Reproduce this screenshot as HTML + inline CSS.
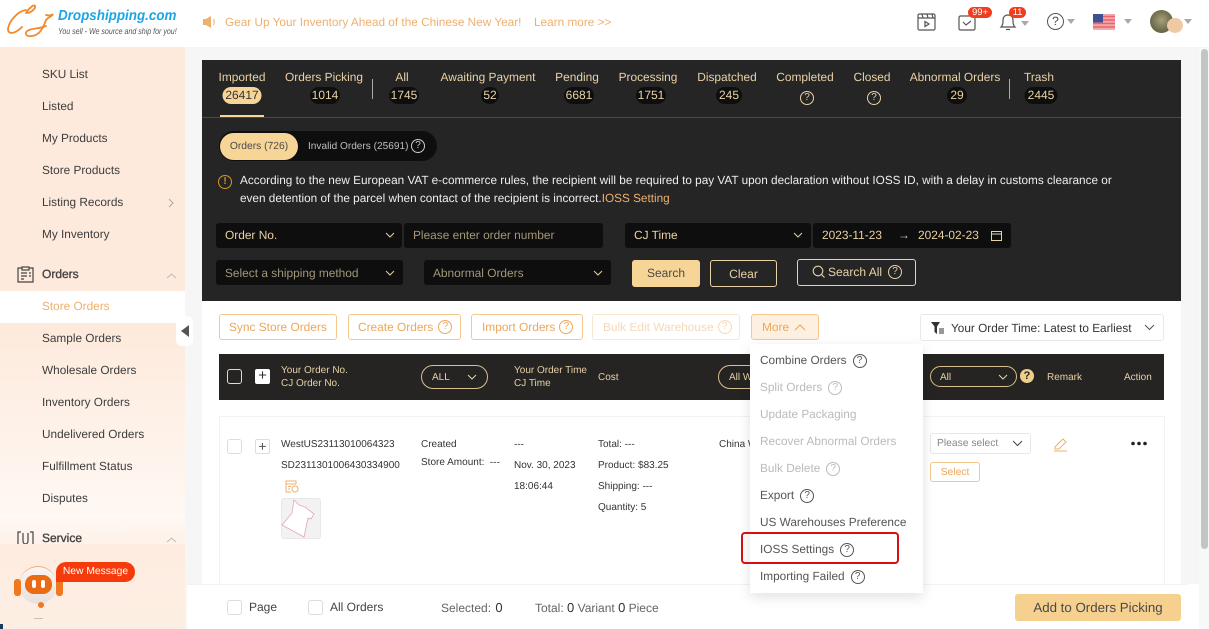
<!DOCTYPE html>
<html><head><meta charset="utf-8"><style>
*{box-sizing:border-box}
html,body{margin:0;padding:0}
body{width:1209px;height:629px;overflow:hidden;position:relative;background:#f6f6f6;font-family:"Liberation Sans",sans-serif;font-size:12px;color:#333;text-rendering:geometricPrecision}
.a,.t,.c{position:absolute}
.t{white-space:nowrap;line-height:16px}
.c{white-space:nowrap;line-height:16px;transform:translateX(-50%)}
.side{color:#3d3d3d;font-size:11.800px;left:42px}
.tab{color:#e8d2a6;font-size:11.900px;top:69px}
.pill{position:absolute;top:87px;height:17px;border-radius:9px;background:#0e0e0e;color:#e8d2a6;font-size:12px;line-height:17px;text-align:center;transform:translateX(-50%)}
.box{position:absolute;background:#0e0e0e;border-radius:3px;height:25px;line-height:25px;font-size:11.900px;color:#e8d2a6;padding-left:9px;white-space:nowrap}
.btn{position:absolute;top:314px;height:26px;border:1px solid #f3c88e;border-radius:3px;background:#fff;color:#eda75a;font-size:11.900px;line-height:24px;white-space:nowrap;padding-left:10px}
.btn .q{vertical-align:2px}
.m{position:absolute;left:760px;font-size:11.800px;line-height:16px;white-space:nowrap;color:#555}
.d{color:#bbb}
.h{color:#e8d2a6;font-size:10px;line-height:13px;position:absolute;white-space:nowrap}
.s{font-size:10px;color:#333;position:absolute;white-space:nowrap;line-height:14px;margin-top:2px}
svg{position:absolute;overflow:visible}
.q{display:inline-block;width:14px;height:14px;border:1px solid currentColor;border-radius:50%;font-size:10px;line-height:12px;text-align:center;vertical-align:1px;margin-left:6px}
.b{-webkit-text-stroke:.35px #444}
</style></head><body>

<!-- header -->
<div class="a" style="left:0;top:0;width:1209px;height:47px;background:#fff"></div>
<svg style="left:0;top:0" width="60" height="46" viewBox="0 0 60 46" fill="none" stroke="#f08a2c" stroke-width="1.800" stroke-linecap="round"><path d="M26 10C18 11 9 21 8 29c0 6 7 5 14-2"/><path d="M26 13c3-5 8-9 9-7 1 2-3 6-7 7"/><path d="M46 15c3 1 6 0 7-1-1 3-5 3-7 6-2 5-5 15-14 16-7 1-8-4-3-6 5-2 10-1 17-4"/></svg>
<div class="t" style="left:58px;top:8px;font-size:14.500px;font-style:italic;font-weight:bold;color:#1aa6e6;transform:scaleX(.925);transform-origin:0 50%">Dropshipping.com</div>
<div class="t" style="left:58px;top:23px;font-size:8.500px;font-style:italic;color:#555;transform:scaleX(.83);transform-origin:0 50%">You sell - We source and ship for you!</div>
<svg style="left:202px;top:14px" width="16" height="16" viewBox="0 0 16 16"><path d="M1 5h3l5-3v12l-5-3H1z" fill="#eeb06e"/><path d="M11.500 5c1 2 1 4 0 6" stroke="#eeb06e" fill="none"/></svg>
<div class="t" style="left:225px;top:14px;font-size:11.800px;color:#eeb06e">Gear Up Your Inventory Ahead of the Chinese New Year!</div>
<div class="t" style="left:534px;top:14px;font-size:11.800px;color:#eeb06e">Learn more &gt;&gt;</div>

<svg style="left:917px;top:13px" width="20" height="18" viewBox="0 0 20 18" fill="none" stroke="#555" stroke-width="1.200"><rect x="1" y="1" width="17" height="16" rx="1.500"/><path d="M1 5h17M5 1l1 4M10 1l1 4M15 1l1 4"/><path d="M8 8.500v5l4-2.500z"/></svg>
<svg style="left:958px;top:14px" width="18" height="17" viewBox="0 0 18 17" fill="none" stroke="#555" stroke-width="1.200"><rect x="1" y="2" width="16" height="14" rx="1.500"/><path d="M5 8l3 3 5-4"/></svg>
<div class="a" style="left:968px;top:7px;width:24px;height:11px;border-radius:6px;background:#f23c1e;color:#fff;font-size:9.500px;line-height:11px;text-align:center">99+</div>
<svg style="left:999px;top:13px" width="18" height="18" viewBox="0 0 18 18" fill="none" stroke="#555" stroke-width="1.200"><path d="M2 14c2-2 2-4 2-7 0-3 2-5 5-5s5 2 5 5c0 3 0 5 2 7z"/><path d="M7 16.500h4"/></svg>
<div class="a" style="left:1009px;top:7px;width:17px;height:11px;border-radius:6px;background:#f23c1e;color:#fff;font-size:9.500px;line-height:11px;text-align:center">11</div>
<div class="a" style="left:1021px;top:21px;border:4px solid transparent;border-top:5px solid #aaa"></div>
<div class="a" style="left:1047px;top:13px;width:17px;height:17px;border:1.200px solid #555;border-radius:50%;text-align:center;font-size:12px;line-height:15px;color:#444">?</div>
<div class="a" style="left:1067px;top:19px;border:4px solid transparent;border-top:5px solid #aaa"></div>
<svg style="left:1093px;top:14px" width="22" height="16" viewBox="0 0 22 16"><rect width="22" height="16" fill="#f3a9ac"/><path d="M0 2.500h22M0 6h22M0 9.500h22M0 13h22" stroke="#e8636a" stroke-width="1.400"/><rect width="10" height="8.500" fill="#3f4f92"/></svg>
<div class="a" style="left:1124px;top:19px;border:4px solid transparent;border-top:5px solid #aaa"></div>
<div class="a" style="left:1150px;top:10px;width:23px;height:23px;border-radius:50%;background:radial-gradient(circle at 50% 45%,#a89f7c 0,#6d6c4c 60%,#4d5a33 100%)"></div>
<div class="a" style="left:1167px;top:18px;width:16px;height:15px;border-radius:50%;background:#eec9a4"></div>
<div class="a" style="left:1184px;top:19px;border:4px solid transparent;border-top:5px solid #aaa"></div>

<!-- sidebar -->
<div class="a" style="left:0;top:47px;width:185px;height:582px;background:linear-gradient(180deg,#fdeadc 0,#fdeadc 280px,#fff8f3 470px,#fdeadc 530px)"></div>
<div class="t side" style="top:66px">SKU List</div>
<div class="t side" style="top:98px">Listed</div>
<div class="t side" style="top:130px">My Products</div>
<div class="t side" style="top:162px">Store Products</div>
<div class="t side" style="top:194px">Listing Records</div>
<svg style="left:168px;top:198px" width="7" height="10" fill="none" stroke="#aaa"><path d="M1 1l4 4-4 4"/></svg>
<div class="t side" style="top:226px">My Inventory</div>
<svg style="left:17px;top:266px" width="17" height="17" viewBox="0 0 17 17" fill="none" stroke="#444" stroke-width="1.200"><path d="M5 2H1v14h15V2h-4"/><rect x="5" y="1" width="7" height="3"/><path d="M4 7h6M4 10h6M4 13h3M12 7h2M12 10h2"/></svg>
<div class="t b" style="left:42px;top:266px;font-size:12px;color:#444">Orders</div>
<svg style="left:166px;top:272px" width="11" height="7" fill="none" stroke="#bbb"><path d="M1 6l4.500-4 4.500 4"/></svg>
<div class="a" style="left:0;top:291px;width:185px;height:32px;background:#fff"></div>
<div class="t side" style="top:298px;color:#eeb06e">Store Orders</div>
<div class="t side" style="top:330px">Sample Orders</div>
<div class="t side" style="top:362px">Wholesale Orders</div>
<div class="t side" style="top:394px">Inventory Orders</div>
<div class="t side" style="top:426px">Undelivered Orders</div>
<div class="t side" style="top:458px">Fulfillment Status</div>
<div class="t side" style="top:490px">Disputes</div>
<svg style="left:17px;top:530px" width="17" height="17" viewBox="0 0 17 17" fill="none" stroke="#444" stroke-width="1.200"><path d="M1 15V2h3M16 15V2h-3M6 3v8c0 4 5 4 5 0V3"/></svg>
<div class="t b" style="left:42px;top:530px;font-size:12px;color:#444">Service</div>
<svg style="left:166px;top:536px" width="11" height="7" fill="none" stroke="#bbb"><path d="M1 6l4.500-4 4.500 4"/></svg>
<div class="a" style="left:0;top:544px;width:185px;height:85px;background:linear-gradient(180deg,#feece0,#fdeee3)"></div>
<div class="a" style="left:176px;top:316px;width:17px;height:30px;border-radius:6px;background:#fff"></div>
<svg style="left:180px;top:325px" width="10" height="12"><path d="M9 0v12L1 6z" fill="#555"/></svg>
<!-- robot -->
<div class="a" style="left:19px;top:566px;width:38px;height:38px;border-radius:50%;background:linear-gradient(180deg,#fbf5f1,#e8e0dc);border-top:1px solid #f3a880"></div>
<div class="a" style="left:14px;top:579px;width:7px;height:17px;border-radius:3px;background:#f0781e"></div>
<div class="a" style="left:56px;top:579px;width:7px;height:17px;border-radius:3px;background:#f0781e"></div>
<div class="a" style="left:25px;top:575px;width:27px;height:19px;border-radius:9px;background:#ec6a12"></div>
<div class="a" style="left:32px;top:580px;width:4px;height:8px;border-radius:2px;background:#fff"></div>
<div class="a" style="left:41px;top:580px;width:4px;height:8px;border-radius:2px;background:#fff"></div>
<div class="a" style="left:38px;top:602px;width:6px;height:6px;border-radius:50%;background:#f0781e"></div>
<div class="a" style="left:34px;top:618px;width:9px;height:1px;background:#cbbfb8"></div>
<div class="a" style="left:56px;top:562px;width:79px;height:20px;border-radius:10px 10px 10px 0;background:#f53a0c;color:#fff;font-size:10.300px;line-height:19px;text-align:center">New Message</div>
<div class="a" style="left:0;top:624px;width:3px;height:5px;background:#1b3a5c"></div>

<!-- dark panel -->
<div class="a" style="left:202px;top:60px;width:979px;height:241px;background:#252525"></div>
<div class="a" style="left:202px;top:117px;width:979px;height:1px;background:#4a4a4a"></div>
<div class="a" style="left:220px;top:115px;width:44px;height:2px;background:#f6d597"></div>
<div class="t c tab" style="left:242px">Imported</div>
<div class="pill" style="left:242px;width:39px;background:#f6d597;color:#333">26417</div>
<div class="t c tab" style="left:324px">Orders Picking</div>
<div class="pill" style="left:325px;width:30px">1014</div>
<div class="a" style="left:372px;top:79px;width:1px;height:20px;background:#aaa"></div>
<div class="t c tab" style="left:402px">All</div>
<div class="pill" style="left:404px;width:30px">1745</div>
<div class="t c tab" style="left:488px">Awaiting Payment</div>
<div class="pill" style="left:490px;width:18px">52</div>
<div class="t c tab" style="left:577px">Pending</div>
<div class="pill" style="left:579px;width:30px">6681</div>
<div class="t c tab" style="left:648px">Processing</div>
<div class="pill" style="left:651px;width:30px">1751</div>
<div class="t c tab" style="left:727px">Dispatched</div>
<div class="pill" style="left:729px;width:26px">245</div>
<div class="t c tab" style="left:805px">Completed</div>
<div class="a" style="left:800px;top:91px;width:14px;height:14px;border:1px solid #e8d2a6;border-radius:50%;color:#e8d2a6;font-size:10px;line-height:12px;text-align:center">?</div>
<div class="t c tab" style="left:872px">Closed</div>
<div class="a" style="left:867px;top:91px;width:14px;height:14px;border:1px solid #e8d2a6;border-radius:50%;color:#e8d2a6;font-size:10px;line-height:12px;text-align:center">?</div>
<div class="t c tab" style="left:955px">Abnormal Orders</div>
<div class="pill" style="left:957px;width:20px">29</div>
<div class="a" style="left:1009px;top:79px;width:1px;height:20px;background:#aaa"></div>
<div class="t c tab" style="left:1039px">Trash</div>
<div class="pill" style="left:1041px;width:33px">2445</div>

<div class="a" style="left:219px;top:131px;width:218px;height:30px;border-radius:15px;background:#0e0e0e"></div>
<div class="a" style="left:220px;top:133px;width:78px;height:27px;border-radius:14px;background:#f6d597;color:#4a4a4a;font-size:10.300px;line-height:28px;text-align:center">Orders (726)</div>
<div class="t" style="left:308px;top:139px;font-size:10.100px;color:#bdbdbd">Invalid Orders (25691)</div>
<div class="a" style="left:411px;top:139px;width:14px;height:14px;border:1px solid #ccc;border-radius:50%;color:#ccc;font-size:10px;line-height:12px;text-align:center">?</div>
<div class="a" style="left:218px;top:175px;width:14px;height:14px;border:1.500px solid #d8981f;border-radius:50%;color:#d8981f;font-size:10px;line-height:11px;text-align:center;font-weight:bold">!</div>
<div class="t" style="left:240px;top:173px;font-size:11.770px;color:#eee">According to the new European VAT e-commerce rules, the recipient will be required to pay VAT upon declaration without IOSS ID, with a delay in customs clearance or</div>
<div class="t" style="left:240px;top:191px;font-size:11.770px;color:#eee">even detention of the parcel when contact of the recipient is incorrect.<span style="color:#eeb06e">IOSS Setting</span></div>

<div class="box" style="left:216px;top:223px;width:186px">Order No.</div>
<div class="box" style="left:404px;top:223px;width:199px;color:#a39679">Please enter order number</div>
<div class="box" style="left:625px;top:223px;width:186px">CJ Time</div>
<div class="box" style="left:813px;top:223px;width:198px">2023-11-23<span style="position:absolute;left:85px;color:#ccc">→</span><span style="position:absolute;left:105px">2024-02-23</span></div>
<svg style="left:991px;top:230px" width="11" height="11" fill="none" stroke="#e8d2a6"><rect x=".5" y="1.500" width="10" height="9"/><path d="M.5 4h10"/></svg>
<div class="box" style="left:216px;top:260px;width:187px;color:#a39679;line-height:27px">Select a shipping method</div>
<div class="box" style="left:424px;top:260px;width:187px;color:#a39679;line-height:27px">Abnormal Orders</div>
<svg style="left:385px;top:232px" width="10" height="7" fill="none" stroke="#e8d2a6"><path d="M1 1l4 4 4-4"/></svg>
<svg style="left:793px;top:232px" width="10" height="7" fill="none" stroke="#e8d2a6"><path d="M1 1l4 4 4-4"/></svg>
<svg style="left:385px;top:270px" width="10" height="7" fill="none" stroke="#e8d2a6"><path d="M1 1l4 4 4-4"/></svg>
<svg style="left:593px;top:270px" width="10" height="7" fill="none" stroke="#e8d2a6"><path d="M1 1l4 4 4-4"/></svg>
<div class="a" style="left:632px;top:260px;width:68px;height:27px;border-radius:3px;background:#f6d597;color:#4a4a4a;font-size:12px;line-height:27px;text-align:center">Search</div>
<div class="a" style="left:710px;top:260px;width:67px;height:27px;border-radius:3px;border:1px solid #e8d2a6;color:#e8d2a6;font-size:12px;line-height:26px;text-align:center">Clear</div>
<div class="a" style="left:797px;top:259px;width:119px;height:27px;border-radius:3px;border:1px solid #e8d2a6;color:#e8d2a6;font-size:12px;line-height:25px;padding-left:30px">Search All</div>
<svg style="left:812px;top:265px" width="14" height="14" fill="none" stroke="#e8d2a6" stroke-width="1.100"><circle cx="6" cy="6" r="4.800"/><path d="M9.500 9.500l3 3"/></svg>
<div class="a" style="left:888px;top:265px;width:14px;height:14px;border:1px solid #e8d2a6;border-radius:50%;color:#e8d2a6;font-size:10px;line-height:12px;text-align:center">?</div>

<!-- content -->
<div class="a" style="left:202px;top:301px;width:979px;height:284px;background:#fff"></div>
<div class="btn" style="left:219px;width:118px;padding-left:9px">Sync Store Orders</div>
<div class="btn" style="left:348px;width:113px;padding-left:9px">Create Orders<span class="q" style="margin-left:5px">?</span></div>
<div class="btn" style="left:471px;width:112px">Import Orders<span class="q" style="margin-left:4px">?</span></div>
<div class="btn" style="left:592px;width:148px;border-color:#f7e6d0;color:#f5d9b8">Bulk Edit Warehouse<span class="q" style="margin-left:4px">?</span></div>
<div class="btn" style="left:751px;width:68px;background:#fdf0e1;border-color:#f3c88e">More</div>
<svg style="left:794px;top:323px" width="12" height="8" fill="none" stroke="#eda75a" stroke-width="1.100"><path d="M1 7l5-5 5 5"/></svg>
<div class="a" style="left:920px;top:314px;width:244px;height:27px;border:1px solid #e8e8e8;border-radius:3px;background:#fff"></div>
<svg style="left:931px;top:322px" width="14" height="12"><path d="M0 0h9L6 4.500V12L3.500 10V4.500z" fill="#333"/><path d="M8 7h5M8 9h5M8 11h5" stroke="#333"/></svg>
<div class="t" style="left:951px;top:320px;font-size:11.800px;color:#333">Your Order Time: Latest to Earliest</div>
<svg style="left:1144px;top:324px" width="11" height="7" fill="none" stroke="#555"><path d="M1 1l4.500 4.500L10 1"/></svg>

<div class="a" style="left:219px;top:354px;width:945px;height:46px;background:#252422"></div>
<div class="a" style="left:227px;top:369px;width:15px;height:15px;border:1px solid #ddd;border-radius:3px"></div>
<div class="a" style="left:255px;top:369px;width:15px;height:15px;background:#fff;border-radius:2px;color:#333;font-size:15px;line-height:14px;text-align:center">+</div>
<div class="h" style="left:281px;top:364px;line-height:13px">Your Order No.<br>CJ Order No.</div>
<div class="a" style="left:421px;top:365px;width:67px;height:24px;border:1px solid #d8c090;border-radius:12px;color:#e8d2a6;font-size:10px;line-height:24px;padding-left:10px">ALL</div>
<svg style="left:467px;top:374px" width="10" height="7" fill="none" stroke="#e8d2a6"><path d="M1 1l4 4 4-4"/></svg>
<div class="h" style="left:514px;top:364px">Your Order Time<br>CJ Time</div>
<div class="h" style="left:598px;top:371px">Cost</div>
<div class="a" style="left:718px;top:365px;width:50px;height:24px;border:1px solid #d8c090;border-radius:12px 0 0 12px;border-right:0;color:#e8d2a6;font-size:10px;line-height:24px;padding-left:10px">All W</div>
<div class="a" style="left:930px;top:366px;width:87px;height:21px;border:1px solid #d8c090;border-radius:11px;color:#e8d2a6;font-size:10px;line-height:21px;padding-left:9px">All</div>
<svg style="left:998px;top:374px" width="10" height="7" fill="none" stroke="#e8d2a6"><path d="M1 1l4 4 4-4"/></svg>
<div class="a" style="left:1020px;top:369px;width:14px;height:14px;border-radius:50%;background:#f0ce8c;color:#252422;font-size:11px;line-height:14px;font-weight:bold;text-align:center">?</div>
<div class="h" style="left:1047px;top:371px">Remark</div>
<div class="h" style="left:1124px;top:371px">Action</div>

<div class="a" style="left:219px;top:416px;width:946px;height:170px;border:1px solid #f2f2f2;border-bottom:0"></div>
<div class="a" style="left:227px;top:439px;width:15px;height:15px;border:1px solid #ddd;border-radius:3px"></div>
<div class="a" style="left:255px;top:439px;width:15px;height:15px;border:1px solid #ddd;border-radius:2px;color:#555;font-size:14px;line-height:13px;text-align:center">+</div>
<div class="s" style="left:281px;top:436px">WestUS23113010064323</div>
<div class="s" style="left:281px;top:457px">SD2311301006430334900</div>
<svg style="left:285px;top:479px" width="14" height="14" fill="none" stroke="#eeb06e"><path d="M11 5V2H1v11h5M1 5h10M3 7.500h3M3 10h2"/><circle cx="10" cy="10" r="3"/></svg>
<div class="a" style="left:281px;top:498px;width:40px;height:41px;border:1px solid #e8e8e8;border-radius:3px;background:#f2f2f2"></div>
<svg style="left:281px;top:498px" width="40" height="41" viewBox="0 0 40 41"><path d="M13 2l5 5 6 2 9 7-3 5-3-1-4 19L1 27 11 15z" fill="#fff" stroke="#e0a8ae" stroke-width=".8"/></svg>
<div class="s" style="left:421px;top:436px">Created</div>
<div class="s" style="left:421px;top:454px">Store Amount:&nbsp; ---</div>
<div class="s" style="left:514px;top:436px">---</div>
<div class="s" style="left:514px;top:457px">Nov. 30, 2023</div>
<div class="s" style="left:514px;top:478px">18:06:44</div>
<div class="s" style="left:598px;top:436px">Total: ---</div>
<div class="s" style="left:598px;top:457px">Product: $83.25</div>
<div class="s" style="left:598px;top:478px">Shipping: ---</div>
<div class="s" style="left:598px;top:499px">Quantity: 5</div>
<div class="s" style="left:719px;top:436px">China W</div>
<div class="a" style="left:930px;top:433px;width:101px;height:21px;border:1px solid #e8e8e8;border-radius:3px;color:#888;font-size:10.300px;line-height:20px;padding-left:6px">Please select</div>
<svg style="left:1012px;top:440px" width="11" height="7" fill="none" stroke="#444"><path d="M1 1l4.500 4.500L10 1"/></svg>
<div class="a" style="left:930px;top:462px;width:50px;height:20px;border:1px solid #f3c88e;border-radius:3px;color:#eda75a;font-size:10.300px;line-height:19px;text-align:center">Select</div>
<svg style="left:1053px;top:436px" width="16" height="16" fill="none" stroke="#eeb06e"><path d="M2 11l8-8 3 3-7 7H2z"/><path d="M1 15h13"/></svg>
<svg style="left:1131px;top:441px" width="16" height="5"><circle cx="2" cy="2.500" r="1.800" fill="#222"/><circle cx="8" cy="2.500" r="1.800" fill="#222"/><circle cx="14" cy="2.500" r="1.800" fill="#222"/></svg>

<!-- footer -->
<div class="a" style="left:187px;top:584px;width:1012px;height:45px;background:#fff"></div>
<div class="a" style="left:187px;top:584px;width:1000px;height:1px;background:#f2f2f2"></div>
<div class="a" style="left:227px;top:600px;width:15px;height:15px;border:1px solid #ddd;border-radius:3px"></div>
<div class="t" style="left:249px;top:599px;font-size:12px;color:#444">Page</div>
<div class="a" style="left:308px;top:600px;width:15px;height:15px;border:1px solid #ddd;border-radius:3px"></div>
<div class="t" style="left:330px;top:599px;font-size:12px;color:#444">All Orders</div>
<div class="t" style="left:441px;top:600px;font-size:12px;color:#666">Selected: <span style="color:#333;margin-left:1px;font-size:13px">0</span></div>
<div class="t" style="left:535px;top:600px;font-size:12px;color:#666">Total: <span style="color:#333;font-size:13px">0</span> Variant <span style="color:#333;font-size:13px">0</span> Piece</div>
<div class="a" style="left:1015px;top:594px;width:166px;height:27px;border-radius:3px;background:#f6d08f;color:#4a4a4a;font-size:13.300px;line-height:27px;text-align:center">Add to Orders Picking</div>

<!-- dropdown -->
<div class="a" style="left:750px;top:344px;width:173px;height:249px;background:#fff;box-shadow:0 4px 12px rgba(0,0,0,.12)"></div>
<div class="m" style="top:352px">Combine Orders<span class="q">?</span></div>
<div class="m d" style="top:379px">Split Orders<span class="q">?</span></div>
<div class="m d" style="top:406px">Update Packaging</div>
<div class="m d" style="top:433px">Recover Abnormal Orders</div>
<div class="m d" style="top:460px">Bulk Delete<span class="q">?</span></div>
<div class="m" style="top:487px">Export<span class="q">?</span></div>
<div class="m" style="top:514px">US Warehouses Preference</div>
<div class="m" style="top:541px">IOSS Settings<span class="q">?</span></div>
<div class="m" style="top:568px">Importing Failed<span class="q">?</span></div>
<div class="a" style="left:741px;top:532px;width:158px;height:32px;border:2px solid #d80f0f;border-radius:4px"></div>

<!-- scrollbar -->
<div class="a" style="left:1199px;top:48px;width:10px;height:581px;background:#f8f8f8"></div>
<div class="a" style="left:1201px;top:49px;width:7px;height:500px;border-radius:4px;background:#c4c4c4"></div>
</body></html>
